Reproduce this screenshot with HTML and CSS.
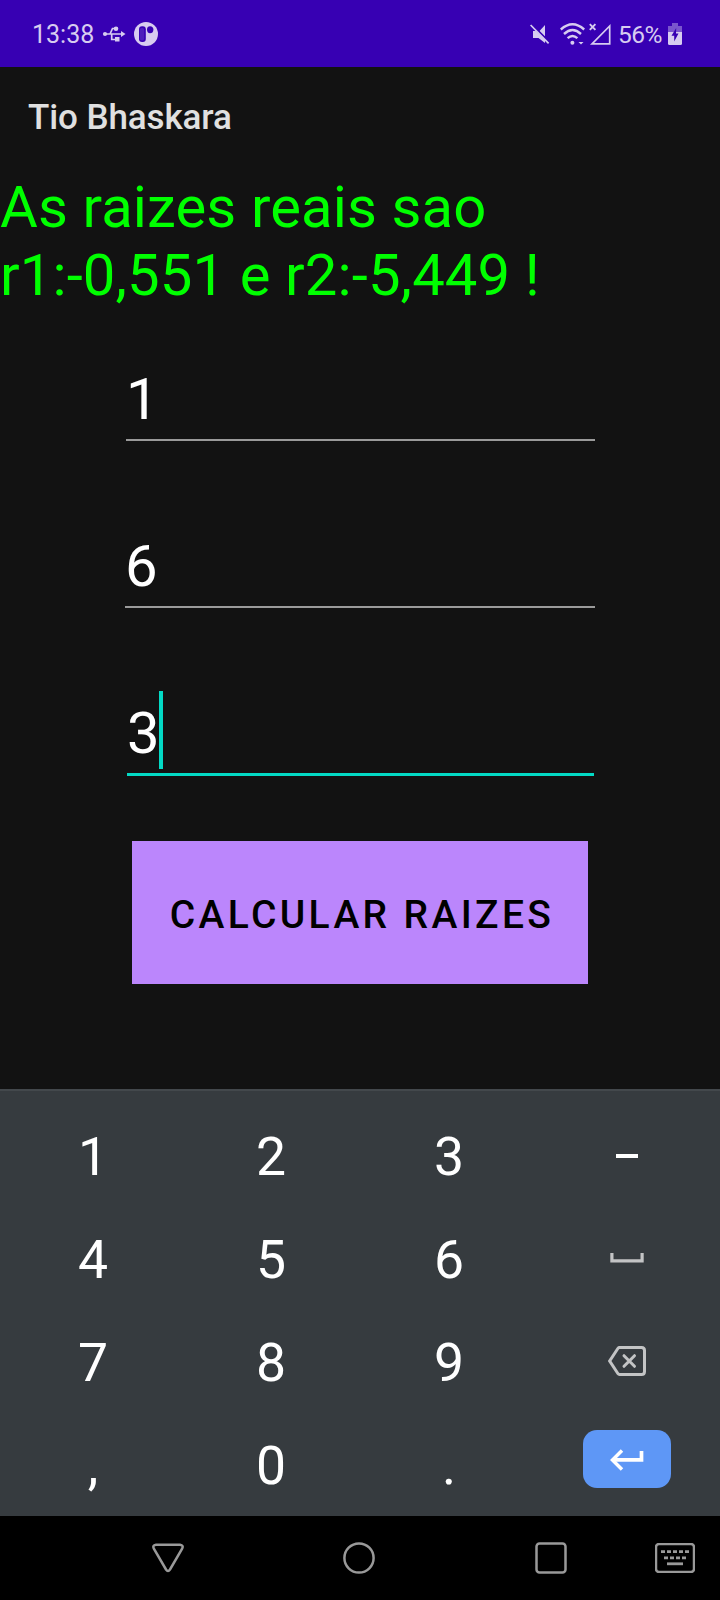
FILE: index.html
```
<!DOCTYPE html>
<html lang="pt-BR">
<head>
<meta charset="utf-8">
<title>Tio Bhaskara</title>
<link rel="stylesheet" href="styles.css">
</head>
<body>
<div class="screen">
  <header class="status">
    <span class="clock">13:38</span>
    <svg class="usb" width="24" height="20" viewBox="0 0 24 20" fill="currentColor" stroke="currentColor">
      <path d="M3 10H20M8 10L10.500 4.500H14M9.700 10V15.500H14" fill="none" stroke-width="1.700"/>
      <circle cx="3" cy="10" r="2.100" stroke="none"/>
      <circle cx="14" cy="4.700" r="2.300" stroke="none"/>
      <rect x="13" y="13" width="4.500" height="4.500" stroke="none"/>
      <path d="M19 7L23.500 10L19 13Z" stroke="none"/>
    </svg>
    <svg class="app" width="24" height="24" viewBox="0 0 24 24">
      <circle cx="12" cy="12" r="12" fill="currentColor"/>
      <rect x="5" y="4.300" width="6.800" height="15.700" rx="3" fill="#3700b3"/>
      <rect x="5.800" y="6" width="4.400" height="12.500" rx="2" fill="currentColor" opacity=".15"/>
      <path d="M13 7.500Q13.200 4.300 16 4.300Q19.400 4.400 19.400 7.700Q19.200 11.200 16 11.200Q13 11.200 13 7.500Z" fill="#3700b3"/>
    </svg>
    <svg class="mute" width="20" height="20" viewBox="0 0 20 20" fill="currentColor">
      <path d="M15 1V12.500L9.500 7ZM3 7H5.800L15 16V19L8.500 14H3Z"/>
      <path d="M1.800 .4L19.500 18.200" stroke="#3700b3" stroke-width="1.600"/>
      <path d="M.6 1L18.600 19.300" stroke="currentColor" stroke-width="1.700"/>
    </svg>
    <svg class="wifi" width="25" height="22" viewBox="0 0 25 22" fill="none" stroke="currentColor" stroke-width="2.400">
      <path d="M.8 6.500Q12.500-3.800 24.200 6.500M4 11Q12.500 3.200 21 11M7.600 15.200Q12.500 10.800 17.400 15.200"/>
      <circle cx="12.400" cy="19.800" r="2" fill="currentColor" stroke="none"/>
      <path d="M18.500 19H23.500L21 21.500Z" fill="currentColor" stroke="none"/>
    </svg>
    <svg class="signal" width="22" height="22" viewBox="0 0 22 22" fill="none" stroke="currentColor">
      <path d="M20.700 3V20.900H3Z" stroke-width="1.700"/>
      <path d="M.8 1.200L6.400 6.800M6.400 1.200L.8 6.800" stroke-width="1.900"/>
    </svg>
    <span class="percent">56%</span>
    <svg class="battery" width="14" height="22" viewBox="0 0 14 22">
      <path d="M4 0H10V3H14V9H0V3H4Z" fill="currentColor" opacity=".42"/>
      <path d="M0 9H14V20.500Q14 22 12.500 22H1.500Q0 22 0 20.500Z" fill="currentColor"/>
      <path d="M8.200 5L3.500 12.700H6.200V18.500L10.500 10.500H8Z" fill="#3700b3"/>
    </svg>
  </header>

  <h1 class="title">Tio Bhaskara</h1>

  <main class="content">
    <p class="result">As raizes reais sao<br>r1:-0,551 e r2:-5,449 !</p>
    <div class="field field-a">1</div>
    <div class="field field-b">6</div>
    <div class="field field-c">3<span class="caret"></span></div>
    <button class="calc" type="button">CALCULAR RAIZES</button>
  </main>

  <section class="keyboard">
    <span class="key">1</span><span class="key">2</span><span class="key">3</span>
    <span class="key minus"><svg width="22" height="4" viewBox="0 0 22 4"><path d="M0 2H22" stroke="#fff" stroke-width="4"/></svg></span>
    <span class="key">4</span><span class="key">5</span><span class="key">6</span>
    <span class="key icon muted"><svg width="34" height="10" viewBox="0 0 34 10"><path d="M1.900 0V7.900H32.100V0" fill="none" stroke="currentColor" stroke-width="3.200"/></svg></span>
    <span class="key">7</span><span class="key">8</span><span class="key">9</span>
    <span class="key icon muted"><svg width="38" height="30" viewBox="0 0 38 30" fill="none" stroke="currentColor" stroke-width="3"><path d="M11.500 1.500H33.500Q36.500 1.500 36.500 4.500V25.500Q36.500 28.500 33.500 28.500H11.500Q10.600 28.500 10 27.700L1.700 15L10 2.300Q10.600 1.500 11.500 1.500Z"/><path d="M16 9.700L26.500 20.300M26.500 9.700L16 20.300" stroke-linecap="round"/></svg></span>
    <span class="key">,</span><span class="key">0</span><span class="key">.</span>
    <span class="key"><span class="enter"><svg width="34" height="22" viewBox="0 0 34 22" fill="none" stroke="#fff"><path d="M31.500 2V10.800H3" stroke-width="3.700"/><path d="M12 1.500L2.500 11L12 20.500" stroke-width="3.500"/></svg></span></span>
  </section>

  <nav class="nav">
    <svg class="back" width="32" height="30" viewBox="0 0 32 30"><path d="M4 1.700H28Q32 2.200 30 6L18 26.500Q16 29.300 14 26.500L2 6Q0 2.200 4 1.700Z"/></svg>
    <svg class="home" width="32" height="32" viewBox="0 0 32 32"><circle cx="16" cy="16" r="14.600"/></svg>
    <svg class="recent" width="32" height="32" viewBox="0 0 32 32"><rect x="1.500" y="1.500" width="29" height="29" rx="3"/></svg>
    <svg class="ime" width="40" height="30" viewBox="0 0 40 30"><rect x="1" y="1" width="38" height="28" rx="3"/><path d="M6 8.700H34" stroke-dasharray="4 2" stroke-width="2.800"/><path d="M9 14.800H31" stroke-dasharray="4 2" stroke-width="2.800"/><path d="M12 20.800H28" stroke-width="2.800"/></svg>
  </nav>
</div>
</body>
</html>
```
FILE: styles.css
```
* { box-sizing: border-box; }

body {
  margin: 0;
  background: #121212;
  font-family: Roboto, "Liberation Sans", sans-serif;
}

svg { display: block; flex: none; }

.screen {
  display: flex;
  flex-direction: column;
  width: 720px;
  height: 1600px;
  overflow: hidden;
  background: #121212;
}

.status {
  display: flex;
  align-items: center;
  height: 67px;
  flex: none;
  padding: 0 38px 0 32px;
  background: #3700b3;
  color: #d7ccf0;
}

.clock { font-size: 25px; line-height: 30px; width: 70px; padding-top: 2px; }
.app { margin-left: 8px; }
.mute { margin-left: auto; }
.wifi { margin-left: 10px; }
.signal { margin-left: 4px; }
.percent { font-size: 24.500px; line-height: 30px; width: 50px; margin-left: 7px; padding-top: 2px; letter-spacing: -0.5px; }

.title {
  margin: 0;
  padding: 1px 0 0 28px;
  font-size: 35px;
  font-weight: 500;
  line-height: 100px;
  letter-spacing: -0.1px;
  color: #e0e0e0;
}

.content {
  display: flex;
  flex-direction: column;
  height: 921px;
  padding-top: 5px;
}

.result {
  margin: 0;
  font-size: 58px;
  line-height: 68px;
  letter-spacing: 0.12px;
  color: #00ff00;
}

.field {
  position: relative;
  height: 76px;
  margin-right: 125px;
  font-size: 58px;
  line-height: 68px;
  color: #fff;
  border-bottom: 2px solid #9a9a9a;
}

.field-a { margin-top: 56px; margin-left: 126px; }
.field-b { margin-top: 91px; margin-left: 125px; }
.field-c {
  height: 77px;
  margin: 91px 126px 0 127px;
  border-bottom: 3px solid #03dac5;
}

.caret {
  position: absolute;
  left: 32px;
  top: -8px;
  width: 4px;
  height: 78px;
  background: #03dac5;
}

.calc {
  width: 456px;
  height: 143px;
  margin: 65px auto 0 132px;
  padding: 4px 0 0 4px;
  border: 0;
  background: #bb86fc;
  color: #000;
  font: 500 39px/46px Roboto, "Liberation Sans", sans-serif;
  letter-spacing: 3.350px;
  white-space: nowrap;
}

.keyboard {
  display: grid;
  grid-template-columns: repeat(4, 178px);
  grid-auto-rows: 103px;
  height: 427px;
  padding: 14px 4px 0;
  border-top: 2px solid #43484c;
  background: #363b3f;
}

.key {
  display: flex;
  align-items: center;
  justify-content: center;
  font-size: 53.500px;
  line-height: 62px;
  color: #fff;
}

.minus { padding-bottom: 1px; }
.icon { padding-bottom: 3px; }
.muted { color: #c3c4c5; }

.enter {
  display: flex;
  align-items: center;
  justify-content: center;
  width: 88px;
  height: 58px;
  margin-bottom: 14px;
  border-radius: 14px;
  background: #5e97f6;
}

.enter svg { margin-top: 3px; }

.nav {
  display: flex;
  align-items: center;
  height: 84px;
  padding-left: 152px;
  background: #000;
}

.nav svg { fill: none; stroke: #999; stroke-width: 2.500; }
.home { margin-left: 159px; }
.recent { margin-left: 160px; }
.ime { margin-left: 88px; }
```
